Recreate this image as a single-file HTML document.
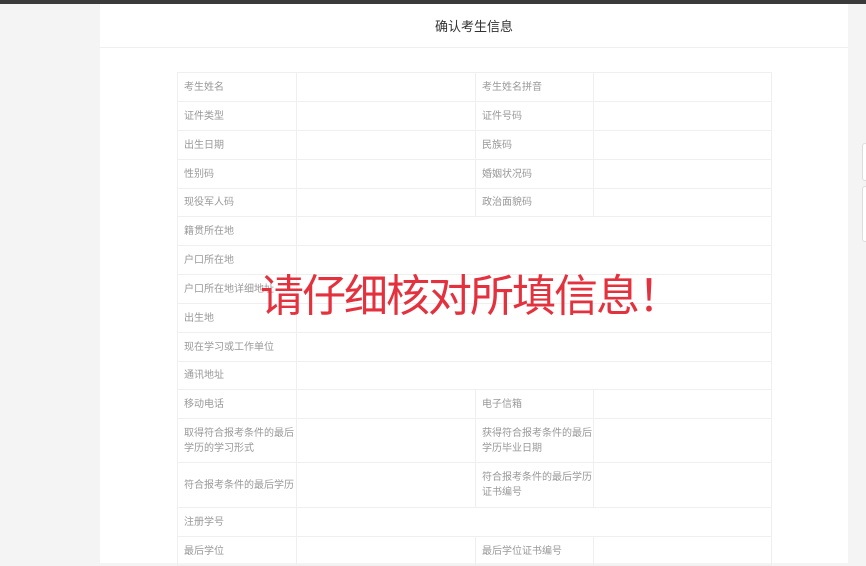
<!DOCTYPE html>
<html><head><meta charset="utf-8"><style>
*{margin:0;padding:0;box-sizing:border-box}
body{width:866px;height:563px;overflow:hidden;background:#f4f4f4;font-family:"Liberation Sans","Noto Sans CJK SC",sans-serif;position:relative}
.top{position:absolute;left:0;top:0;width:866px;height:4px;background:#3a3a3a}
.card{position:absolute;left:100px;top:4px;width:748px;height:559px;background:#fff}
.hd{position:absolute;left:100px;top:4px;width:748px;height:44px;border-bottom:1px solid #efefef;text-align:center;font-size:13px;line-height:46px;color:#333}
table{position:absolute;left:177px;top:72px;width:594px;border-collapse:collapse;font-size:10px;color:#999;table-layout:fixed}
td{border:1px solid #efefef;padding:0 0 0 6px;line-height:15px;vertical-align:middle;white-space:nowrap;overflow:visible}
tr{height:29px}
.big{position:absolute;left:260px;top:262px;font-size:44px;color:#e3323e;font-family:"Noto Sans CJK SC",sans-serif;letter-spacing:-2px;line-height:60px}
.sb{position:absolute;left:862px;width:6px;border:1px solid #ddd;border-radius:3px;background:#fff}
</style></head><body>
<div class="top"></div>
<div class="card"></div>
<div class="hd">确认考生信息</div>
<table>
<colgroup><col style="width:119px"><col style="width:179px"><col style="width:118px"><col style="width:178px"></colgroup>
<tr><td>考生姓名</td><td></td><td>考生姓名拼音</td><td></td></tr>
<tr><td>证件类型</td><td></td><td>证件号码</td><td></td></tr>
<tr><td>出生日期</td><td></td><td>民族码</td><td></td></tr>
<tr><td>性别码</td><td></td><td>婚姻状况码</td><td></td></tr>
<tr style="height:28px"><td>现役军人码</td><td></td><td>政治面貌码</td><td></td></tr>
<tr><td>籍贯所在地</td><td colspan="3"></td></tr>
<tr><td>户口所在地</td><td colspan="3"></td></tr>
<tr><td>户口所在地详细地址</td><td colspan="3"></td></tr>
<tr><td>出生地</td><td colspan="3"></td></tr>
<tr><td>现在学习或工作单位</td><td colspan="3"></td></tr>
<tr style="height:28px"><td>通讯地址</td><td colspan="3"></td></tr>
<tr><td>移动电话</td><td></td><td>电子信箱</td><td></td></tr>
<tr style="height:44px"><td>取得符合报考条件的最后<br>学历的学习形式</td><td></td><td>获得符合报考条件的最后<br>学历毕业日期</td><td></td></tr>
<tr style="height:45px"><td>符合报考条件的最后学历</td><td></td><td>符合报考条件的最后学历<br>证书编号</td><td></td></tr>
<tr><td>注册学号</td><td colspan="3"></td></tr>
<tr><td>最后学位</td><td></td><td>最后学位证书编号</td><td></td></tr>
</table>
<div class="big">请仔细核对所填信息！</div>
<div class="sb" style="top:143px;height:38px"></div>
<div class="sb" style="top:186px;height:56px"></div>
</body></html>
